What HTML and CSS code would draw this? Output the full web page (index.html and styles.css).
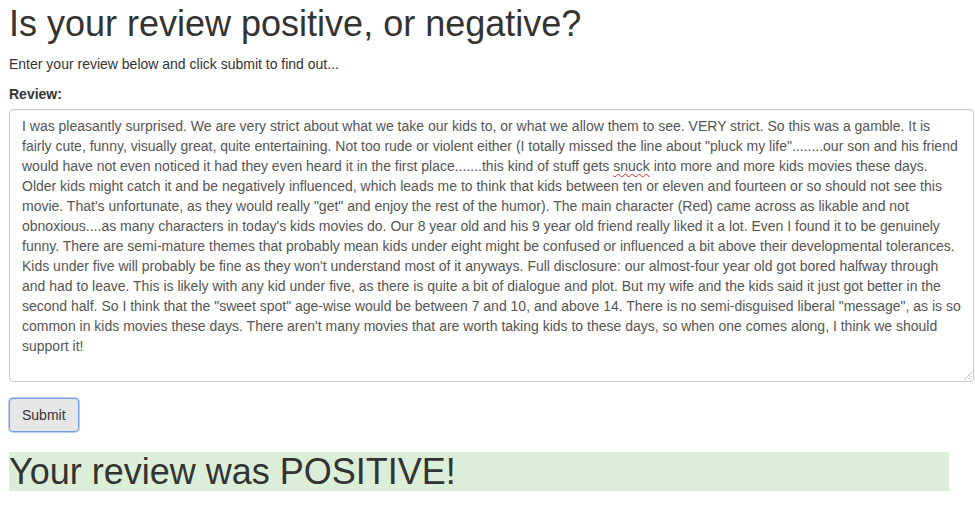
FILE: index.html
```html
<!DOCTYPE html>
<html lang="en">
<head>
<meta charset="utf-8">
<title>Review sentiment</title>
<link rel="stylesheet" href="styles.css">
</head>
<body>
<main class="page">
  <h1 class="title">Is your review positive, or negative?</h1>
  <p class="intro">Enter your review below and click submit to find out...</p>
  <form class="form">
    <div class="form-group">
      <label class="label" for="review">Review:</label>
      <div class="textarea" id="review" role="textbox" aria-multiline="true">I was pleasantly surprised. We are very strict about what we take our kids to, or what we allow them to see. VERY strict. So this was a gamble. It is fairly cute, funny, visually great, quite entertaining. Not too rude or violent either (I totally missed the line about "pluck my life"........our son and his friend would have not even noticed it had they even heard it in the first place.......this kind of stuff gets <span class="misspelt">snuck</span> into more and more kids movies these days. Older kids might catch it and be negatively influenced, which leads me to think that kids between ten or eleven and fourteen or so should not see this movie. That's unfortunate, as they would really "get" and enjoy the rest of the humor). The main character (Red) came across as likable and not obnoxious....as many characters in today's kids movies do. Our 8 year old and his 9 year old friend really liked it a lot. Even I found it to be genuinely funny. There are semi-mature themes that probably mean kids under eight might be confused or influenced a bit above their developmental tolerances. Kids under five will probably be fine as they won't understand most of it anyways. Full disclosure: our almost-four year old got bored halfway through and had to leave. This is likely with any kid under five, as there is quite a bit of dialogue and plot. But my wife and the kids said it just got better in the second half. So I think that the "sweet spot" age-wise would be between 7 and 10, and above 14. There is no semi-disguised liberal "message", as is so common in kids movies these days. There aren't many movies that are worth taking kids to these days, so when one comes along, I think we should support it!<svg class="grip" width="9" height="9" viewBox="0 0 9 9" aria-hidden="true"><path d="M8.5 1.5 L1.5 8.5 M8.5 5.5 L5.5 8.5" stroke="#7a7a7a" stroke-width="1" stroke-dasharray="1 1" fill="none"/></svg></div>
    </div>
    <button type="button" class="btn">Submit</button>
  </form>
  <h1 class="result">Your review was POSITIVE!</h1>
</main>
</body>
</html>
```

FILE: styles.css
```css
* { box-sizing: border-box; }

html, body {
  margin: 0;
  padding: 0;
  background: #fff;
}

body {
  font-family: "Liberation Sans", Arial, Helvetica, sans-serif;
  font-size: 14px;
  line-height: 20px;
  color: #333;
}

.page {
  padding: 0 1px 0 9px;
}

.title {
  margin: 4px 0 10px;
  font-size: 36px;
  font-weight: 500;
  line-height: 1.1;
}

.intro {
  margin: 0 0 10px;
}

.form-group {
  margin-bottom: 15px;
}

.label {
  display: block;
  margin-bottom: 5px;
  font-weight: bold;
}

.textarea {
  position: relative;
  height: 273px;
  padding: 6px 12px;
  border: 1px solid #ccc;
  border-radius: 4px;
  box-shadow: inset 0 1px 1px rgba(0, 0, 0, 0.075);
  color: #555;
  background: #fff;
  font-size: 14px;
  line-height: 20px;
  overflow: hidden;
}

.misspelt {
  text-decoration: underline wavy #e02020;
  text-decoration-thickness: 1px;
  text-underline-offset: 2px;
}

.grip {
  position: absolute;
  right: 1px;
  bottom: 1px;
}

.btn {
  display: block;
  margin-top: 16px;
  padding: 6px 12px;
  font-family: inherit;
  font-size: 14px;
  line-height: 20px;
  color: #333;
  background: #e6e6e6;
  border: 1px solid #6f9ee6;
  border-radius: 4px;
  box-shadow: 0 0 0 1px rgba(120, 160, 230, 0.5);
}

.result {
  width: 940px;
  margin: 20px 0 0;
  font-size: 36px;
  font-weight: 500;
  line-height: 1.1;
  background: #dbefd8;
}
```
